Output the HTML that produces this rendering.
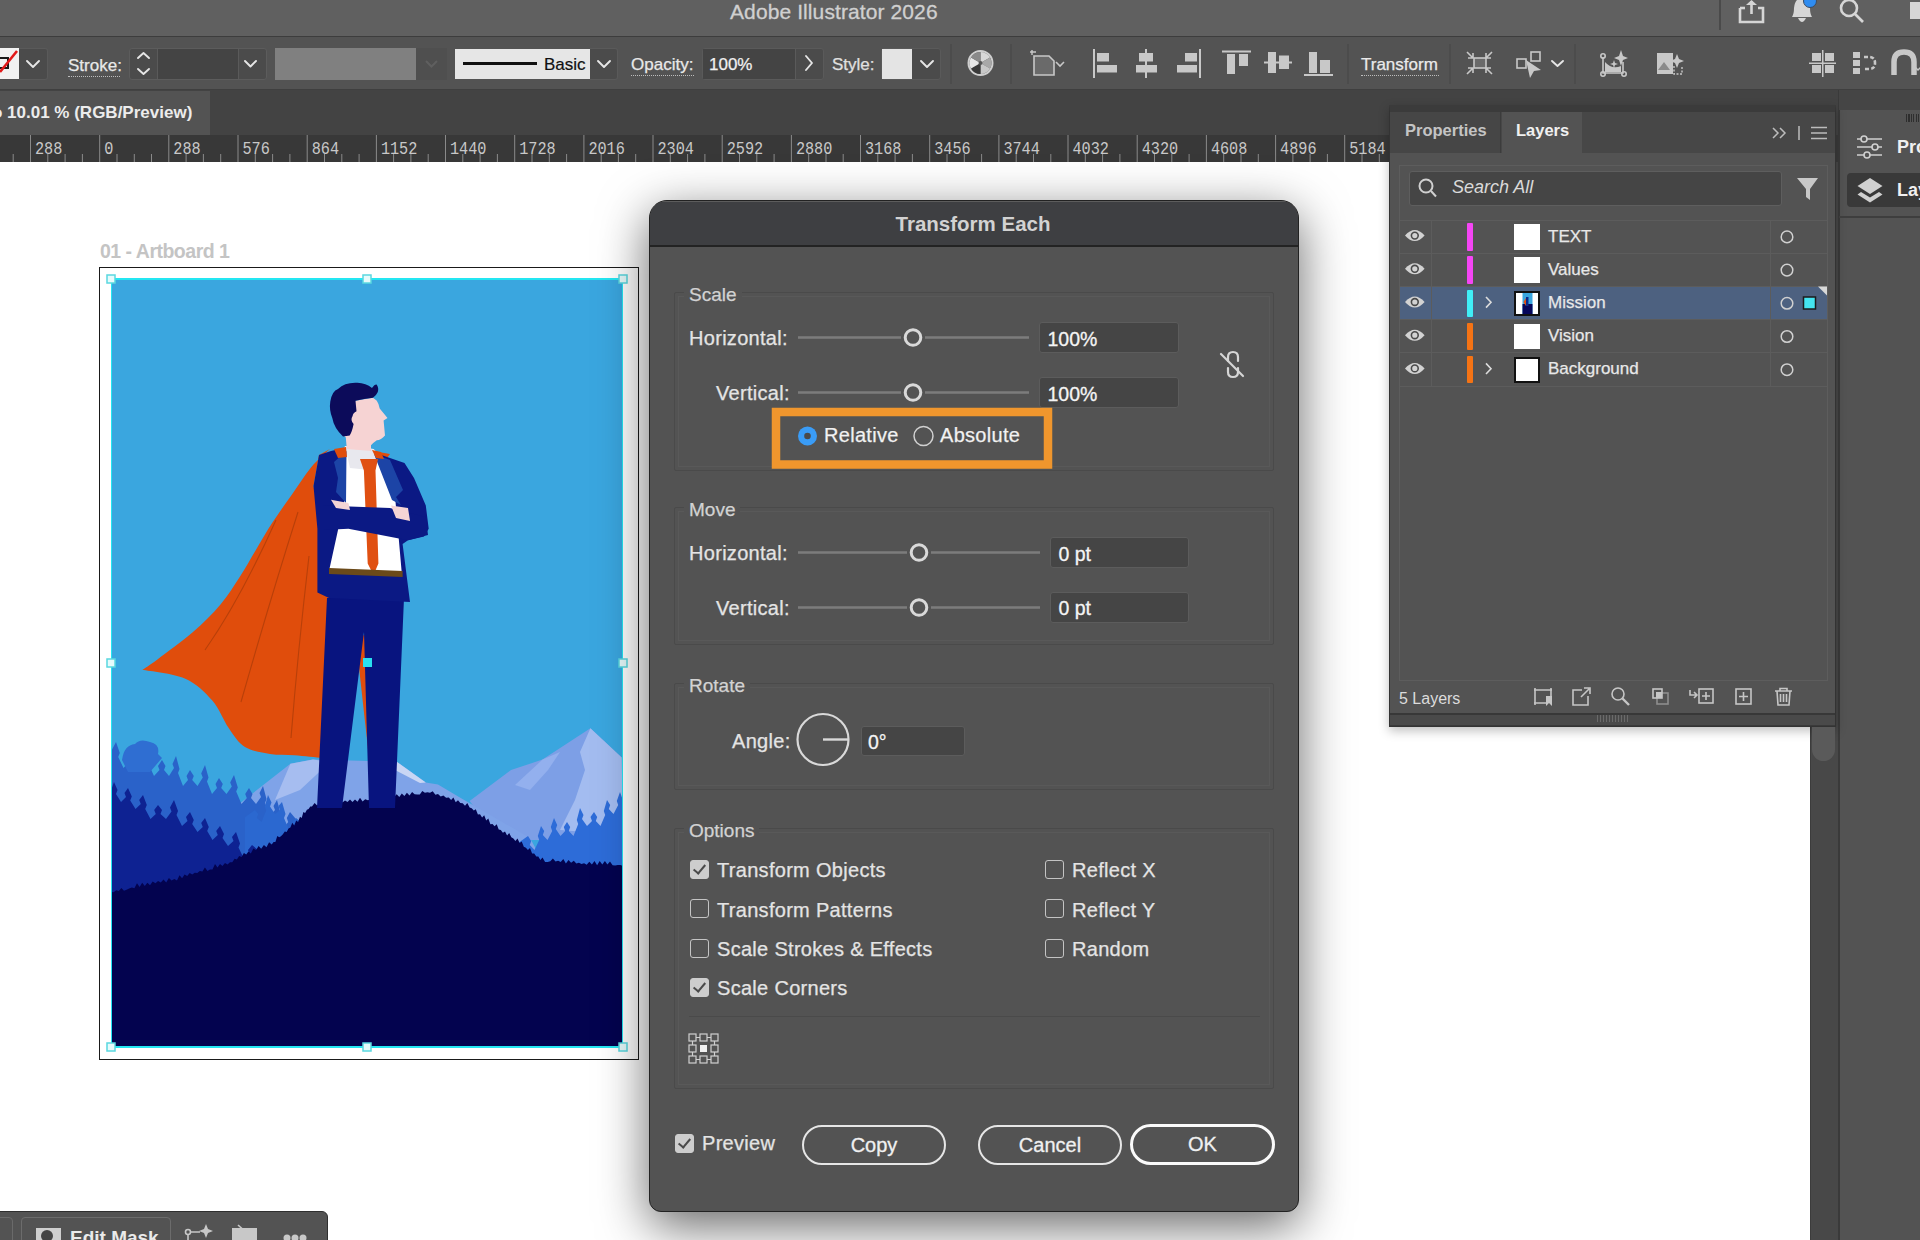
<!DOCTYPE html>
<html><head><meta charset="utf-8">
<style>
*{box-sizing:border-box;margin:0;padding:0}
html,body{width:1920px;height:1240px;overflow:hidden;background:#fff;font-family:"Liberation Sans",sans-serif}
.a{position:absolute}
#title{left:0;top:0;width:1920px;height:37px;background:#606060;border-bottom:1px solid #3d3d3d}
#ctrl{left:0;top:37px;width:1920px;height:53px;background:#535353;border-bottom:1px solid #3f3f3f}
#tabs{left:0;top:90px;width:1920px;height:45px;background:#434343}
#ruler{left:0;top:135px;width:1390px;height:27px;background:#383838}
#canvas{left:0;top:162px;width:1810px;height:1078px;background:#fff}
#vscroll{left:1810px;top:162px;width:28px;height:1078px;background:#484848;border-left:1px solid #3c3c3c}
#dock{left:1838px;top:90px;width:82px;height:1150px;background:#535353;border-left:2px solid #3a3a3a}
.lbl{color:#e0e0e0}
.grp{border:1px solid #4a4a4a;border-radius:2px}
.grp::after{content:"";position:absolute;left:3px;top:3px;right:3px;bottom:3px;border:1px solid #595959}
.glab{font-size:19px;color:#d2d2d2;background:#535353;padding:0 5px;margin-top:1.5px;-webkit-text-stroke:0.25px #d2d2d2}
.dl{font-size:20px;color:#e4e4e4;white-space:nowrap;letter-spacing:0.3px;-webkit-text-stroke:0.25px #e4e4e4}
.fld{background:#454545;border:1.5px solid #5c5c5c;border-radius:3px}
.fld span{position:absolute;left:7.5px;top:4.5px;font-size:19.5px;color:#f4f4f4;-webkit-text-stroke:0.3px #f4f4f4}
.cb{width:19px;height:19px;border:1.5px solid #c4c4c4;border-radius:3px}
.cb.on{background:#cdcdcd;border-color:#cdcdcd}
.cb.on::after{content:"";position:absolute;left:5px;top:1px;width:5px;height:10px;border:solid #4a4a4a;border-width:0 2.4px 2.4px 0;transform:rotate(40deg)}
.btn{border:2px solid #e6e6e6;border-radius:21px;text-align:center;font-size:20px;color:#f0f0f0;line-height:36px;-webkit-text-stroke:0.3px #f0f0f0}

.rn{top:138.5px;font-family:"Liberation Mono",monospace;font-size:15.2px;color:#c8c8c8;transform:scaleY(1.17);transform-origin:0 0;letter-spacing:0px}
</style></head><body>
<div id="title" class="a"></div>
<div id="ctrl" class="a"></div>
<div id="tabs" class="a"></div>
<div id="ruler" class="a"></div>
<div id="canvas" class="a"></div>
<div id="vscroll" class="a"></div>
<div id="dock" class="a"></div>


<svg class="a" style="left:960px;top:40px" width="960" height="48" viewBox="960 40 960 48">
 <!-- globe / recolor -->
 <circle cx="980.5" cy="63" r="12" fill="#5a5a5a" stroke="#cfcfcf" stroke-width="2"/>
 <path d="M980.5 63 L980.5 52 A11 11 0 0 1 990 57.5 Z" fill="#d8d8d8"/>
 <path d="M980.5 63 L990 57.5 A11 11 0 0 1 990 68.5 Z" fill="#a8a8a8"/>
 <path d="M980.5 63 L990 68.5 A11 11 0 0 1 980.5 74 Z" fill="#c8c8c8"/>
 <path d="M980.5 63 L980.5 74 A11 11 0 0 1 971 68.5 Z" fill="#3a3a3a"/>
 <path d="M980.5 63 L971 68.5 A11 11 0 0 1 971 57.5 Z" fill="#e8e8e8"/>
 <path d="M980.5 63 L971 57.5 A11 11 0 0 1 980.5 52 Z" fill="#8a8a8a"/>
 <circle cx="980.5" cy="63" r="2" fill="#555"/>
 <!-- artboard icon -->
 <path d="M1034 56 H1049 L1054 61 V75 H1034 Z" fill="#6a6a6a" stroke="#c8c8c8" stroke-width="1.6"/>
 <path d="M1030 52 H1036 M1032 50 V55" stroke="#c8c8c8" stroke-width="1.4"/>
 <path d="M1056 62 L1060 66 L1064 62" fill="none" stroke="#c8c8c8" stroke-width="1.6"/>
 <g fill="#c8c8c8">
  <!-- align left -->
  <rect x="1093" y="49" width="2" height="29"/><rect x="1097" y="53" width="12" height="8.5"/><rect x="1097" y="65" width="20" height="7.5"/>
  <!-- align hcenter -->
  <rect x="1145" y="49" width="2" height="29"/><rect x="1139" y="53" width="14" height="8.5"/><rect x="1136" y="65" width="21" height="7.5"/>
  <!-- align right -->
  <rect x="1199" y="49" width="2" height="29"/><rect x="1185" y="53" width="12" height="8.5"/><rect x="1177" y="65" width="20" height="7.5"/>
  <!-- align top -->
  <rect x="1222" y="50.5" width="29" height="2"/><rect x="1227" y="54" width="8" height="20"/><rect x="1239" y="54" width="9" height="12"/>
  <!-- align vcenter -->
  <rect x="1264" y="61.5" width="28" height="2"/><rect x="1268" y="52" width="8" height="21"/><rect x="1279" y="55.5" width="10" height="13.5"/>
  <!-- align bottom -->
  <rect x="1304" y="74" width="29" height="2"/><rect x="1309" y="52" width="8" height="21"/><rect x="1320" y="60" width="10" height="13"/>
 </g>
 <!-- shrink icon -->
 <g fill="none" stroke="#c8c8c8" stroke-width="1.6">
  <rect x="1474" y="58" width="12" height="10" fill="#6a6a6a"/>
  <path d="M1467 52 L1473 58 M1473 53 V58 H1468"/><path d="M1492 52 L1486 58 M1486 53 V58 H1491"/>
  <path d="M1467 74 L1473 68 M1473 73 V68 H1468"/><path d="M1492 74 L1486 68 M1486 73 V68 H1491"/>
  <rect x="1517" y="59" width="9" height="9"/><rect x="1531" y="52" width="9" height="9"/>
 </g>
 <path d="M1526 60 L1541 70 L1534 71 L1530 78 Z" fill="#c8c8c8"/>
 <!-- crop AI -->
 <g fill="none" stroke="#c8c8c8" stroke-width="1.6">
  <path d="M1603 57 V73 H1623 V62"/><circle cx="1603" cy="56" r="2.2"/><circle cx="1603" cy="74" r="2.2"/><circle cx="1624" cy="74" r="2.2"/>
 </g>
 <path d="M1605 72 L1605 62 Q1612 70 1621 66 L1621 72 Z" fill="#c8c8c8"/>
 <path d="M1621 50 L1623 56 L1628 58 L1623 60 L1621 66 L1619 60 L1614 58 L1619 56 Z" fill="#c8c8c8"/>
 <path d="M1614 60 L1615 63 L1618 64 L1615 65 L1614 68 L1613 65 L1610 64 L1613 63 Z" fill="#c8c8c8"/>
 <!-- image AI -->
 <path d="M1657 53 H1673 V74 H1657 Z" fill="#c8c8c8"/>
 <path d="M1658 70 L1664 62 L1670 70 Z" fill="#8a8a8a"/>
 <path d="M1677 54 L1679 59 L1684 61 L1679 63 L1677 68 L1675 63 L1670 61 L1675 59 Z" fill="#c8c8c8"/>
 <path d="M1674 66 V74 H1682 V66" fill="none" stroke="#c8c8c8" stroke-width="1.4" stroke-dasharray="2 1.5"/>
 <!-- grid -->
 <g fill="#c8c8c8"><rect x="1812" y="53" width="9" height="8"/><rect x="1825" y="53" width="9" height="8"/><rect x="1812" y="65" width="9" height="8"/><rect x="1825" y="65" width="9" height="8"/><rect x="1822" y="50" width="1.5" height="27"/><rect x="1809" y="62.5" width="27" height="1.5"/></g>
 <!-- puppet -->
 <g fill="#c8c8c8"><rect x="1853" y="52" width="7" height="6"/><rect x="1853" y="60" width="7" height="6"/><rect x="1853" y="68" width="7" height="6"/></g>
 <path d="M1864 57 H1869 Q1875 57 1875 63 Q1875 69 1869 69 H1864" fill="none" stroke="#c8c8c8" stroke-width="2.6" stroke-dasharray="4 2"/>
 <!-- magnet -->
 <path d="M1894 75 V62 Q1894 52 1904 52 Q1914 52 1914 62 V75" fill="none" stroke="#c8c8c8" stroke-width="5.5"/>
 <path d="M1914 66 L1918 70 L1922 66" fill="none" stroke="#c8c8c8" stroke-width="1.4"/>
</svg>

<!-- doc tab -->
<div class="a" style="left:0;top:91px;width:210px;height:44px;background:#535353"></div>
<div class="a" style="left:-8px;top:103px;font-size:17px;font-weight:bold;color:#ececec;white-space:nowrap">o 10.01 % (RGB/Preview)</div>

<svg class="a" style="left:0;top:135px" width="1390" height="27" viewBox="0 0 1390 27">
<g stroke="#8a8a8a" stroke-width="1">
<path d="M-38.7 0 V27"/>
<path d="M-21.4 19 V27"/>
<path d="M-4.1 19 V27"/>
<path d="M13.2 19 V27"/>
<path d="M30.5 0 V27"/>
<path d="M47.8 19 V27"/>
<path d="M65.1 19 V27"/>
<path d="M82.4 19 V27"/>
<path d="M99.7 0 V27"/>
<path d="M117.0 19 V27"/>
<path d="M134.3 19 V27"/>
<path d="M151.5 19 V27"/>
<path d="M168.8 0 V27"/>
<path d="M186.1 19 V27"/>
<path d="M203.4 19 V27"/>
<path d="M220.7 19 V27"/>
<path d="M238.0 0 V27"/>
<path d="M255.3 19 V27"/>
<path d="M272.6 19 V27"/>
<path d="M289.9 19 V27"/>
<path d="M307.2 0 V27"/>
<path d="M324.5 19 V27"/>
<path d="M341.8 19 V27"/>
<path d="M359.1 19 V27"/>
<path d="M376.4 0 V27"/>
<path d="M393.6 19 V27"/>
<path d="M410.9 19 V27"/>
<path d="M428.2 19 V27"/>
<path d="M445.5 0 V27"/>
<path d="M462.8 19 V27"/>
<path d="M480.1 19 V27"/>
<path d="M497.4 19 V27"/>
<path d="M514.7 0 V27"/>
<path d="M532.0 19 V27"/>
<path d="M549.3 19 V27"/>
<path d="M566.6 19 V27"/>
<path d="M583.9 0 V27"/>
<path d="M601.2 19 V27"/>
<path d="M618.4 19 V27"/>
<path d="M635.7 19 V27"/>
<path d="M653.0 0 V27"/>
<path d="M670.3 19 V27"/>
<path d="M687.6 19 V27"/>
<path d="M704.9 19 V27"/>
<path d="M722.2 0 V27"/>
<path d="M739.5 19 V27"/>
<path d="M756.8 19 V27"/>
<path d="M774.1 19 V27"/>
<path d="M791.4 0 V27"/>
<path d="M808.7 19 V27"/>
<path d="M826.0 19 V27"/>
<path d="M843.2 19 V27"/>
<path d="M860.5 0 V27"/>
<path d="M877.8 19 V27"/>
<path d="M895.1 19 V27"/>
<path d="M912.4 19 V27"/>
<path d="M929.7 0 V27"/>
<path d="M947.0 19 V27"/>
<path d="M964.3 19 V27"/>
<path d="M981.6 19 V27"/>
<path d="M998.9 0 V27"/>
<path d="M1016.2 19 V27"/>
<path d="M1033.5 19 V27"/>
<path d="M1050.8 19 V27"/>
<path d="M1068.0 0 V27"/>
<path d="M1085.3 19 V27"/>
<path d="M1102.6 19 V27"/>
<path d="M1119.9 19 V27"/>
<path d="M1137.2 0 V27"/>
<path d="M1154.5 19 V27"/>
<path d="M1171.8 19 V27"/>
<path d="M1189.1 19 V27"/>
<path d="M1206.4 0 V27"/>
<path d="M1223.7 19 V27"/>
<path d="M1241.0 19 V27"/>
<path d="M1258.3 19 V27"/>
<path d="M1275.6 0 V27"/>
<path d="M1292.9 19 V27"/>
<path d="M1310.1 19 V27"/>
<path d="M1327.4 19 V27"/>
<path d="M1344.7 0 V27"/>
<path d="M1362.0 19 V27"/>
<path d="M1379.3 19 V27"/>
<path d="M1396.6 19 V27"/>
<path d="M1413.9 0 V27"/>
<path d="M1431.2 19 V27"/>
<path d="M1448.5 19 V27"/>
<path d="M1465.8 19 V27"/>
</g>
</svg>
<div class="a rn" style="left:35.0px">288</div>
<div class="a rn" style="left:104.2px">0</div>
<div class="a rn" style="left:173.3px">288</div>
<div class="a rn" style="left:242.5px">576</div>
<div class="a rn" style="left:311.7px">864</div>
<div class="a rn" style="left:380.9px">1152</div>
<div class="a rn" style="left:450.0px">1440</div>
<div class="a rn" style="left:519.2px">1728</div>
<div class="a rn" style="left:588.4px">2016</div>
<div class="a rn" style="left:657.5px">2304</div>
<div class="a rn" style="left:726.7px">2592</div>
<div class="a rn" style="left:795.9px">2880</div>
<div class="a rn" style="left:865.0px">3168</div>
<div class="a rn" style="left:934.2px">3456</div>
<div class="a rn" style="left:1003.4px">3744</div>
<div class="a rn" style="left:1072.5px">4032</div>
<div class="a rn" style="left:1141.7px">4320</div>
<div class="a rn" style="left:1210.9px">4608</div>
<div class="a rn" style="left:1280.1px">4896</div>
<div class="a rn" style="left:1349.2px">5184</div>

<!-- title bar content -->
<div class="a" style="left:730px;top:0px;font-size:21px;color:#d0d0d0;letter-spacing:0.1px;white-space:nowrap;-webkit-text-stroke:0.3px #d0d0d0">Adobe Illustrator 2026</div>
<div class="a" style="left:1719px;top:0;width:2px;height:30px;background:#4a4a4a"></div>
<svg class="a" style="left:1730px;top:0" width="190" height="36" viewBox="1730 0 190 36">
 <g fill="none" stroke="#d6d6d6" stroke-width="2.6">
  <path d="M1740 8 V22 H1763 V8 H1758"/><path d="M1745 8 H1740"/>
  <path d="M1751.5 14 V1"/>
 </g>
 <path d="M1746 5 L1751.5 0 L1757 5 Z" fill="#d6d6d6"/>
 <path d="M1792 17 Q1794 14 1794 8 Q1795 -2 1802 -2 Q1809 -2 1810 8 Q1810 14 1812 17 Z" fill="#d6d6d6"/>
 <path d="M1798 18 H1806 Q1804 22 1802 22 Q1800 22 1798 18Z" fill="#d6d6d6"/>
 <circle cx="1810" cy="1" r="6.5" fill="#2f8cf0" stroke="#3a4a60" stroke-width="1"/>
 <g fill="none" stroke="#d6d6d6" stroke-width="2.6"><circle cx="1849" cy="8" r="8"/><path d="M1855 14 L1863 22"/></g>
 <rect x="1910" y="2" width="12" height="17" fill="#d6d6d6"/>
</svg>

<!-- control bar -->
<div class="a" style="left:0;top:48px;width:19px;height:31px;background:#f2f2f2"></div>
<svg class="a" style="left:0;top:48px" width="20" height="31" viewBox="0 0 20 31"><rect x="-3" y="10" width="11" height="10" fill="none" stroke="#1a1a1a" stroke-width="2"/><path d="M0 24 L17 3" stroke="#e21a1a" stroke-width="2.6"/></svg>
<div class="a" style="left:19px;top:48px;width:29px;height:32px;background:#4b4b4b;border:1px solid #5a5a5a;border-left:none;border-radius:0 3px 3px 0"></div>
<div class="a" style="left:68px;top:56px;font-size:17px;color:#e8e8e8;-webkit-text-stroke:0.25px #e8e8e8">Stroke:</div>
<div class="a" style="left:68px;top:76px;width:52px;border-top:1.5px dotted #bdbdbd"></div>
<div class="a" style="left:129px;top:48px;width:138px;height:32px;border:1px solid #5c5c5c;border-radius:3px;background:#4b4b4b"></div>
<div class="a" style="left:158px;top:49px;width:80px;height:30px;background:#444"></div>
<div class="a" style="left:157px;top:49px;width:1px;height:30px;background:#5a5a5a"></div>
<div class="a" style="left:238px;top:49px;width:1px;height:30px;background:#5a5a5a"></div>
<div class="a" style="left:275px;top:48px;width:141px;height:32px;background:#808080"></div>
<div class="a" style="left:416px;top:48px;width:31px;height:32px;background:#4f4f4f"></div>
<div class="a" style="left:455px;top:49px;width:135px;height:30px;background:#e6e6e6"></div>
<div class="a" style="left:463px;top:62px;width:74px;height:3px;background:#111"></div>
<div class="a" style="left:544px;top:55px;font-size:17px;color:#111;-webkit-text-stroke:0.2px #111">Basic</div>
<div class="a" style="left:590px;top:48px;width:28px;height:32px;background:#4b4b4b;border:1px solid #5a5a5a;border-left:none;border-radius:0 3px 3px 0"></div>
<div class="a" style="left:631px;top:55px;font-size:17px;color:#e8e8e8;-webkit-text-stroke:0.25px #e8e8e8">Opacity:</div>
<div class="a" style="left:631px;top:75px;width:63px;border-top:1.5px dotted #bdbdbd"></div>
<div class="a" style="left:702px;top:48px;width:122px;height:32px;border:1px solid #5a5a5a;border-radius:3px;background:#4b4b4b"></div>
<div class="a" style="left:703px;top:49px;width:92px;height:30px;background:#444"></div>
<div class="a" style="left:795px;top:49px;width:1px;height:30px;background:#5a5a5a"></div>
<div class="a" style="left:709px;top:55px;font-size:17px;color:#f0f0f0;-webkit-text-stroke:0.25px #f0f0f0">100%</div>
<div class="a" style="left:832px;top:55px;font-size:17px;color:#e0e0e0;-webkit-text-stroke:0.25px #e0e0e0">Style:</div>
<div class="a" style="left:881px;top:48px;width:60px;height:32px;border:1px solid #5a5a5a;border-radius:3px;background:#4b4b4b"></div>
<div class="a" style="left:882px;top:49px;width:30px;height:30px;background:#e4e4e4"></div>
<div class="a" style="left:950px;top:44px;width:2px;height:40px;background:#4c4c4c"></div>
<div class="a" style="left:1010px;top:44px;width:2px;height:40px;background:#4c4c4c"></div>
<div class="a" style="left:1347px;top:44px;width:2px;height:40px;background:#4c4c4c"></div>
<div class="a" style="left:1449px;top:44px;width:2px;height:40px;background:#4c4c4c"></div>
<div class="a" style="left:1574px;top:44px;width:2px;height:40px;background:#4c4c4c"></div>
<div class="a" style="left:1361px;top:55px;font-size:17px;color:#eaeaea;-webkit-text-stroke:0.25px #eaeaea">Transform</div>
<div class="a" style="left:1361px;top:75px;width:78px;border-top:1.5px dotted #bdbdbd"></div>
<svg class="a" style="left:0;top:36px" width="1920" height="54" viewBox="0 36 1920 54">
 <g fill="none" stroke="#e6e6e6" stroke-width="1.9" stroke-linecap="round" stroke-linejoin="round">
  <path d="M27 61 L33 67 L39 61"/>
  <path d="M138 58 L143.5 53 L149 58"/><path d="M138 69 L143.5 74 L149 69"/>
  <path d="M245 61 L250.5 66.5 L256 61"/>
  <path d="M598 61 L604 67 L610 61"/>
  <path d="M806 56 L812 63 L806 70"/>
  <path d="M921 61 L927 67 L933 61"/>
  <path d="M1552 61 L1557.5 66 L1563 61"/>
 </g>
 <path d="M426 61 L431.5 66.5 L437 61" fill="none" stroke="#5f5f5f" stroke-width="2"/>
</svg>




<!-- artboard -->
<div class="a" style="left:100px;top:240px;font-size:19.5px;font-weight:bold;color:#c4c4c4;letter-spacing:-0.5px;white-space:nowrap">01 - Artboard 1</div>
<div class="a" style="left:99px;top:267px;width:540px;height:793px;border:1.5px solid #1a1a1a;background:#fff"></div>

<svg class="a" style="left:111px;top:278px" width="512" height="770" viewBox="111 278 512 770">
 <rect x="111" y="278" width="512" height="770" fill="#3aa6df"/>
 <!-- right mountain -->
 <path d="M469.6 801 L511 770 L542.5 759.6 L590.4 728.3 L621.7 757.5 L623 840 L500 840 Z" fill="#7d9fe6"/>
 <path d="M590.4 728.3 L621.7 757.5 L623 835 L560 830 L575 800 L585 770 L580 752 Z" fill="#a3bcf0"/>
 <path d="M542.5 759.6 L560 752 L548 770 L530 790 L515 785 Z" fill="#93b0ee"/>
 <!-- center mountain -->
 <path d="M240.4 803 L290.4 763.75 L313 759.6 L396.7 761.7 L425.8 782.5 L438 784.6 L459 797 L530 838 L545 866 L240 866 Z" fill="#7fa3e8"/>
 <path d="M290.4 763.75 L313 759.6 L330 762 L300 790 L275 800 Z" fill="#a6bdf0"/>
 <path d="M396.7 761.7 L425.8 782.5 L420 783 L395 770 Z" fill="#c9d6f4"/>
 <!-- left trees mid layer -->
 <path d="M111.0 900.0 L111.0 751.6 L116.0 742.0 L119.8 753.0 L118.2 757.0 L123.5 768.0 L128.8 762.0 L127.2 758.0 L131.0 752.0 L134.8 758.0 L133.2 762.0 L138.5 768.0 L143.8 760.0 L142.2 756.0 L146.0 748.0 L150.0 760.0 L148.5 764.0 L154.0 776.0 L159.5 770.0 L158.0 766.0 L162.0 760.0 L165.5 766.0 L164.0 770.0 L169.0 776.0 L174.0 768.0 L172.5 764.0 L176.0 756.0 L179.5 769.0 L178.0 773.0 L183.0 786.0 L188.0 780.0 L186.5 776.0 L190.0 770.0 L193.8 776.0 L192.2 780.0 L197.5 786.0 L202.8 777.5 L201.2 773.5 L205.0 765.0 L208.5 777.5 L207.0 781.5 L212.0 794.0 L217.0 788.0 L215.5 784.0 L219.0 778.0 L222.8 784.0 L221.2 788.0 L226.5 794.0 L231.8 786.5 L230.2 782.5 L234.0 775.0 L237.8 787.5 L236.2 791.5 L241.5 804.0 L246.8 798.0 L245.2 794.0 L249.0 788.0 L252.5 794.0 L251.0 798.0 L256.0 804.0 L261.0 797.0 L259.5 793.0 L263.0 786.0 L266.5 799.0 L265.0 803.0 L270.0 816.0 L275.0 810.0 L273.5 806.0 L277.0 800.0 L280.2 812.0 L278.8 816.0 L283.5 828.0 L288.2 822.0 L286.8 818.0 L290.0 812.0 L298.0 821.6 L298.0 900.0 Z" fill="#2a62c9"/>
 <path d="M122 760 Q124 745 135 744 Q140 738 150 742 Q160 744 158 754 L162 758 L150 772 L128 772 Z" fill="#2f6ed2"/>
 <path d="M245.0 880.0 L245.0 817.2 L255.0 810.0 L258.2 814.0 L256.8 818.0 L261.5 822.0 L266.2 810.5 L264.8 806.5 L268.0 795.0 L271.5 802.5 L270.0 806.5 L275.0 814.0 L280.0 810.0 L278.5 806.0 L282.0 802.0 L285.5 814.0 L284.0 818.0 L289.0 830.0 L294.0 826.0 L292.5 822.0 L296.0 818.0 L305.0 825.2 L305.0 880.0 Z" fill="#2b68d0"/>
 <!-- left dark tree layer -->
 <path d="M111.0 900.0 L111.0 790.4 L114.0 782.0 L117.5 790.0 L116.0 794.0 L121.0 802.0 L126.0 797.0 L124.5 793.0 L128.0 788.0 L131.8 796.5 L130.2 800.5 L135.5 809.0 L140.8 804.0 L139.2 800.0 L143.0 795.0 L146.8 805.0 L145.2 809.0 L150.5 819.0 L155.8 814.0 L154.2 810.0 L158.0 805.0 L162.0 810.0 L160.5 814.0 L166.0 819.0 L171.5 811.5 L170.0 807.5 L174.0 800.0 L178.0 811.0 L176.5 815.0 L182.0 826.0 L187.5 821.0 L186.0 817.0 L190.0 812.0 L193.8 820.0 L192.2 824.0 L197.5 832.0 L202.8 827.0 L201.2 823.0 L205.0 818.0 L208.8 827.0 L207.2 831.0 L212.5 840.0 L217.8 835.0 L216.2 831.0 L220.0 826.0 L224.0 834.0 L222.5 838.0 L228.0 846.0 L233.5 841.0 L232.0 837.0 L236.0 832.0 L240.0 843.5 L238.5 847.5 L244.0 859.0 L249.5 854.0 L248.0 850.0 L252.0 845.0 L262.0 853.4 L262.0 900.0 Z" fill="#0e2292"/>
 <!-- right trees -->
 <path d="M516.0 880.0 L516.0 844.4 L528.0 836.0 L531.2 841.0 L529.8 845.0 L534.5 850.0 L539.2 840.0 L537.8 836.0 L541.0 826.0 L544.2 831.0 L542.8 835.0 L547.5 840.0 L552.2 831.0 L550.8 827.0 L554.0 818.0 L557.2 825.0 L555.8 829.0 L560.5 836.0 L565.2 831.0 L563.8 827.0 L567.0 822.0 L570.2 827.0 L568.8 831.0 L573.5 836.0 L578.2 824.0 L576.8 820.0 L580.0 808.0 L583.5 815.0 L582.0 819.0 L587.0 826.0 L592.0 821.0 L590.5 817.0 L594.0 812.0 L597.2 817.0 L595.8 821.0 L600.5 826.0 L605.2 815.0 L603.8 811.0 L607.0 800.0 L610.2 805.0 L608.8 809.0 L613.5 814.0 L618.2 805.0 L616.8 801.0 L620.0 792.0 L623.0 800.4 L623.0 880.0 Z" fill="#2d6cd8"/>
 <!-- hill -->
 <path d="M111.0 891.9 L113.6 892.2 L116.2 890.3 L118.8 891.0 L121.4 888.1 L124.0 890.7 L126.6 889.7 L129.2 888.5 L131.8 887.6 L134.4 888.3 L137.0 883.2 L139.6 886.9 L142.2 882.8 L144.8 885.9 L147.4 882.7 L150.0 885.3 L152.7 881.6 L155.4 883.2 L158.1 881.1 L160.8 882.4 L163.5 879.5 L166.2 882.4 L168.9 878.1 L171.6 880.6 L174.3 879.1 L177.0 880.5 L179.5 875.3 L182.1 878.3 L184.6 874.5 L187.2 876.1 L189.7 872.9 L192.2 874.5 L194.8 872.8 L197.3 873.1 L199.8 871.1 L202.4 871.4 L204.9 867.6 L207.5 871.1 L210.0 869.4 L212.5 869.4 L215.0 864.1 L217.5 867.5 L220.0 864.1 L222.5 866.1 L225.0 863.0 L227.5 864.5 L230.0 862.2 L232.3 862.2 L234.6 858.8 L236.9 859.4 L239.2 856.0 L241.6 857.1 L243.9 852.9 L246.2 854.6 L248.5 851.4 L250.8 853.6 L253.4 848.4 L256.0 850.3 L258.6 846.1 L261.2 848.8 L263.9 844.9 L266.5 847.3 L269.1 842.3 L271.7 844.6 L273.6 842.0 L275.4 842.1 L277.3 836.1 L279.2 837.3 L281.0 836.3 L282.9 834.3 L284.8 831.5 L286.7 831.9 L288.5 828.6 L290.4 827.6 L292.3 822.7 L294.2 825.4 L296.2 820.6 L298.1 822.1 L300.0 816.8 L301.7 818.0 L303.4 812.0 L305.1 813.0 L306.9 809.7 L308.6 809.0 L310.3 806.6 L312.0 806.4 L314.6 802.9 L317.1 805.6 L319.7 803.8 L322.3 804.2 L324.9 801.1 L327.4 803.7 L330.0 802.8 L332.5 802.1 L335.0 801.4 L337.5 801.8 L340.0 798.6 L342.5 802.5 L345.0 800.4 L347.5 802.1 L350.0 799.4 L352.5 801.9 L355.0 799.6 L357.5 801.7 L360.0 797.8 L362.6 801.4 L365.2 799.3 L367.9 800.3 L370.5 799.5 L373.1 800.3 L375.7 795.5 L378.4 799.2 L381.0 796.7 L383.6 799.3 L386.2 796.6 L388.8 797.7 L391.5 797.6 L394.1 796.9 L396.7 794.2 L399.3 797.1 L401.8 793.6 L404.4 795.9 L406.9 792.7 L409.5 795.4 L412.1 792.0 L414.6 794.2 L417.2 794.4 L419.8 794.6 L422.3 790.9 L424.9 792.7 L427.4 792.2 L430.0 792.8 L432.7 791.2 L435.4 794.7 L438.0 793.9 L440.7 796.5 L443.4 795.6 L446.1 797.7 L448.8 797.6 L451.1 799.9 L453.4 797.4 L455.7 802.3 L458.0 800.2 L460.3 803.1 L462.7 803.3 L465.0 805.8 L467.3 802.9 L469.6 807.6 L471.7 808.3 L473.8 810.6 L475.8 809.3 L477.9 814.4 L480.0 814.3 L482.1 817.4 L484.2 815.3 L486.2 820.5 L488.3 818.5 L490.4 824.2 L492.5 823.9 L494.6 826.3 L496.7 824.2 L498.7 829.4 L500.8 830.0 L502.9 832.7 L505.0 831.4 L507.1 835.4 L509.2 833.0 L511.3 837.2 L513.4 838.6 L515.4 840.9 L517.5 838.6 L519.6 843.1 L521.7 841.4 L523.8 846.7 L525.9 847.8 L527.9 850.1 L530.0 848.1 L532.1 853.4 L534.2 853.5 L536.3 856.6 L538.3 856.5 L540.4 859.9 L542.5 857.6 L545.1 862.1 L547.7 862.0 L550.3 861.3 L552.9 858.4 L555.5 861.6 L558.1 860.8 L560.7 862.0 L563.3 858.9 L565.9 863.4 L568.5 860.1 L571.1 862.8 L573.8 860.8 L576.3 863.6 L578.9 862.7 L581.5 864.1 L584.1 863.2 L586.7 864.7 L589.3 861.8 L591.9 864.6 L594.5 861.1 L597.1 865.2 L599.7 860.9 L602.3 864.5 L604.9 861.0 L607.4 864.4 L610.0 861.4 L612.6 865.2 L615.2 865.6 L617.8 865.1 L620.4 865.1 L623.0 866.1 L623 1048 L111 1048 Z" fill="#03034f"/>
 <!-- cape -->
 <path d="M330.0 449.0 C326.8 452.1 317.4 459.8 311.0 467.4 C304.6 475.0 298.2 485.7 291.8 494.8 C285.4 503.9 278.6 513.1 272.6 522.3 C266.6 531.4 261.5 540.6 256.0 549.7 C250.5 558.8 245.6 567.9 239.7 577.0 C233.8 586.1 228.3 595.3 220.5 604.5 C212.7 613.7 203.5 622.9 193.0 632.0 C182.5 641.1 165.8 653.1 157.4 659.4 C149.0 665.7 144.8 668.1 142.3 669.8 C149.4 671.2 173.1 673.4 184.8 678.5 C196.5 683.6 205.0 692.2 212.3 700.5 C219.6 708.8 223.2 720.2 228.7 728.0 C234.1 735.8 238.1 742.7 245.0 747.0 C251.9 751.3 261.8 752.6 270.0 754.0 C278.2 755.4 285.8 754.6 294.5 755.3 C303.2 756.0 317.4 757.5 322.0 758.0 L335 758 L335 600 L313.5 486 L319 455 Z" fill="#e04d0c"/>
 <path d="M356 640 L370 767 L381 760 L372 630 Z" fill="#e04d0c"/>
 <g fill="none" stroke="#b8400a" stroke-width="1.1"><path d="M298 512 Q270 600 241 702"/><path d="M309 556 Q298 650 291 738"/><path d="M276 520 Q240 600 205 650"/></g>
 <path d="M373 451 L390 454 L384 462 Z" fill="#e04d0c"/>
 <!-- legs -->
 <path d="M327 598 L404 598 L395 808 L369 808 L364 632 L342 808 L317 808 Z" fill="#08147f"/>
 <!-- jacket -->
 <path d="M319 455 L331 451 L346.5 447.4 L375.5 453 L404.5 463 L414 478 L425.8 505.5 L428.7 528.7 L424 536.4 L408 540.3 L402.6 544 L410 602 L329 598 L317.4 592.6 L317.4 528.7 L313.5 486 Z" fill="#0b1984"/>
 <!-- shirt -->
 <path d="M345 446 L373.5 449 L380 455 L395 495.8 L401.6 571 L329 571 L345.5 495.8 L342 455 Z" fill="#ffffff"/>
 <path d="M345 446 L373.5 449 L380 458 L370 470 L350 468 Z" fill="#e8e8ee"/>
 <!-- lapels -->
 <path d="M334 462 L346.5 451 L346 503 L336 492 L338 478 Z" fill="#1c44a6"/>
 <path d="M374 454 L390 460 L403 490 L396 497 L401 505 L392 500 Z" fill="#1c44a6"/>
 <!-- tie -->
 <path d="M360 459 L378 459 L375.5 470.6 L378.4 563.5 L373.5 575 L367.7 563.5 L363.9 470.6 Z" fill="#e05012"/>
 <!-- belt -->
 <path d="M329 568 L402.6 571 L402.6 577 L329 574 Z" fill="#6b4a1a"/>
 <!-- arms -->
 <path d="M323 505.5 L390 508 L425.8 517 L428 535 L408 540.3 L348.4 528.7 L323 530 Z" fill="#0b1984"/>
 <path d="M331 499.7 L348.4 503 L350 510 L336 508 Z" fill="#f5d5d5"/>
 <path d="M391 505.5 L408 508 L410 521 L396 518 Z" fill="#f5d5d5"/>
 <!-- neck & face -->
 <path d="M355.5 400.7 L373 397.8 L376.8 400.7 Q379 404 379.7 408.4 L387.5 418 L383.6 420.5 L385 435.5 Q381 440 376.8 440.3 Q373 443 371 445.2 L371 451 L346.8 449 L345.8 437.4 Q340 432 342 424 Q343 417 347.8 418 Z" fill="#f6d3d3"/>
 <!-- hair -->
 <path d="M330.3 401.6 Q332 391 338 389 Q345 382 357.4 382.7 Q366 383 372 388 Q375 384 376.8 384.7 Q379 388 377.8 392 Q376 396 373 397.8 Q364 399 355.5 400.7 L356.5 411.3 Q353 413 352.6 416 Q350 420 353.6 424 Q352 432 349.7 435.5 L343 436.5 Q334 428 332.3 418 Q329 410 330.3 401.6 Z" fill="#0c0b5a"/>
 <path d="M334 449 L346 447 L347 457 L338 458 Z" fill="#e04d0c"/>
 <path d="M372 450 L381 452 L384 459 L376 458 Z" fill="#e04d0c"/>
 <!-- selection -->
 <g fill="none" stroke="#24e6f2" stroke-width="2"><rect x="111" y="279" width="512" height="768"/></g>
</svg>
<svg class="a" style="left:100px;top:268px" width="540" height="790" viewBox="100 268 540 790">
 <g fill="#e6fbfc" stroke="#5ad8e0" stroke-width="1.5">
  <rect x="107" y="275" width="8" height="8"/><rect x="363" y="275" width="8" height="8"/><rect x="619" y="275" width="8" height="8"/>
  <rect x="107" y="659" width="8" height="8"/><rect x="619" y="659" width="8" height="8"/>
  <rect x="107" y="1043" width="8" height="8"/><rect x="363" y="1043" width="8" height="8"/><rect x="619" y="1043" width="8" height="8"/>
 </g>
 <rect x="363" y="658" width="9" height="9" fill="#29e0f0"/>
</svg>

<!-- contextual bar -->
<div class="a" style="left:-10px;top:1211px;width:338px;height:40px;background:#535353;border:1px solid #2f2f2f;border-radius:6px"></div>
<div class="a" style="left:-5px;top:1217px;width:18px;height:30px;border:1px solid #6a6a6a;border-radius:4px"></div>
<div class="a" style="left:21px;top:1217px;width:150px;height:30px;border:1px solid #6c6c6c;border-radius:4px"></div>
<div class="a" style="left:36px;top:1228px;width:25px;height:15px;background:#cfcfcf"></div>
<div class="a" style="left:41px;top:1230px;width:12px;height:12px;border-radius:50%;background:#444"></div>
<div class="a" style="left:70px;top:1227px;font-size:19px;font-weight:bold;color:#eaeaea">Edit Mask</div>
<svg class="a" style="left:180px;top:1220px" width="140" height="20" viewBox="180 1220 140 20">
 <g fill="none" stroke="#c8c8c8" stroke-width="1.6"><circle cx="188" cy="1232" r="2.5"/><path d="M191 1232 H200 M188 1235 V1240"/><path d="M238 1225 L255 1240"/></g>
 <path d="M206 1224 L208 1229 L213 1231 L208 1233 L206 1238 L204 1233 L199 1231 L204 1229 Z" fill="#c8c8c8"/>
 <rect x="232" y="1228" width="25" height="15" fill="#c8c8c8"/>
 <circle cx="287" cy="1238" r="3.5" fill="#c8c8c8"/><circle cx="295" cy="1238" r="3.5" fill="#c8c8c8"/><circle cx="303" cy="1238" r="3.5" fill="#c8c8c8"/>
</svg>
<!-- fill gap right of ruler -->
<div class="a" style="left:1390px;top:135px;width:448px;height:27px;background:#3a3a3a"></div>

<!-- layers panel -->
<div class="a" style="left:1389px;top:105px;width:447px;height:622px;background:#535353;border:1px solid #333;border-top:7px solid #3b3b3b;box-shadow:0 4px 10px rgba(0,0,0,0.25)"></div>
<div class="a" style="left:1390px;top:112px;width:445px;height:41px;background:#474747"></div>
<div class="a" style="left:1390px;top:112px;width:111px;height:41px;background:#464646;border-right:1px solid #3c3c3c"></div>
<div class="a" style="left:1502px;top:112px;width:80px;height:42px;background:#535353"></div>
<div class="a" style="left:1405px;top:121px;font-size:16.5px;font-weight:bold;color:#c4c4c4">Properties</div>
<div class="a" style="left:1516px;top:121px;font-size:16.5px;font-weight:bold;color:#f0f0f0">Layers</div>
<svg class="a" style="left:1760px;top:112px" width="75" height="41" viewBox="1760 112 75 41">
 <g fill="none" stroke="#bcbcbc" stroke-width="1.5"><path d="M1773 128 L1778 133 L1773 138"/><path d="M1780 128 L1785 133 L1780 138"/></g>
 <path d="M1799 126 V140" stroke="#bcbcbc" stroke-width="1.5"/>
 <g stroke="#bcbcbc" stroke-width="1.6"><path d="M1811 127.5 H1827 M1811 133 H1827 M1811 138.5 H1827"/></g>
</svg>
<div class="a" style="left:1399px;top:165px;width:429px;height:516px;border:1px solid #5d5d5d"></div>
<div class="a" style="left:1409px;top:171px;width:373px;height:35px;background:#454545;border:1px solid #5e5e5e;border-radius:3px"></div>
<svg class="a" style="left:1400px;top:165px" width="430" height="50" viewBox="1400 165 430 50">
 <g fill="none" stroke="#d0d0d0" stroke-width="2"><circle cx="1426" cy="186" r="6.5"/><path d="M1431 191 L1436 196.5"/></g>
 <path d="M1797 178 H1818 L1810 189 V200 L1806 197 V189 Z" fill="#c8c8c8"/>
</svg>
<div class="a" style="left:1452px;top:177px;font-size:18px;font-style:italic;color:#dadada">Search All</div>

<div class="a" style="left:1400px;top:219.6px;width:427px;height:33.2px;background:#535353;border-top:1px solid #5c5c5c"></div>
<div class="a" style="left:1431px;top:219.6px;width:1px;height:33.2px;background:#5c5c5c"></div>
<div class="a" style="left:1770px;top:219.6px;width:1px;height:33.2px;background:#5c5c5c"></div>
<div class="a" style="left:1467px;top:223.1px;width:5.5px;height:27.5px;background:#f545f5;border-radius:1px"></div>
<div class="a" style="left:1513.5px;top:224.2px;width:26px;height:25.5px;background:#fff;border:none"></div>
<div class="a" style="left:1548px;top:226.6px;font-size:17px;color:#e8e8e8;-webkit-text-stroke:0.25px #e8e8e8">TEXT</div>
<div class="a" style="left:1400px;top:252.8px;width:427px;height:33.2px;background:#535353;border-top:1px solid #5c5c5c"></div>
<div class="a" style="left:1431px;top:252.8px;width:1px;height:33.2px;background:#5c5c5c"></div>
<div class="a" style="left:1770px;top:252.8px;width:1px;height:33.2px;background:#5c5c5c"></div>
<div class="a" style="left:1467px;top:256.3px;width:5.5px;height:27.5px;background:#f545f5;border-radius:1px"></div>
<div class="a" style="left:1513.5px;top:257.40000000000003px;width:26px;height:25.5px;background:#fff;border:none"></div>
<div class="a" style="left:1548px;top:259.8px;font-size:17px;color:#e8e8e8;-webkit-text-stroke:0.25px #e8e8e8">Values</div>
<div class="a" style="left:1400px;top:286.0px;width:427px;height:33.2px;background:#4d6180;border-top:1px solid #5c5c5c"></div>
<div class="a" style="left:1431px;top:286.0px;width:1px;height:33.2px;background:#5c5c5c"></div>
<div class="a" style="left:1770px;top:286.0px;width:1px;height:33.2px;background:#5c5c5c"></div>
<div class="a" style="left:1467px;top:289.5px;width:5.5px;height:27.5px;background:#40eef8;border-radius:1px"></div>
<div class="a" style="left:1513.5px;top:290.6px;width:26px;height:25.5px;background:#fff;border:2px solid #111"></div>
<div class="a" style="left:1548px;top:293.0px;font-size:17px;color:#e8e8e8;-webkit-text-stroke:0.25px #e8e8e8">Mission</div>
<div class="a" style="left:1400px;top:319.2px;width:427px;height:33.2px;background:#535353;border-top:1px solid #5c5c5c"></div>
<div class="a" style="left:1431px;top:319.2px;width:1px;height:33.2px;background:#5c5c5c"></div>
<div class="a" style="left:1770px;top:319.2px;width:1px;height:33.2px;background:#5c5c5c"></div>
<div class="a" style="left:1467px;top:322.7px;width:5.5px;height:27.5px;background:#f57314;border-radius:1px"></div>
<div class="a" style="left:1513.5px;top:323.8px;width:26px;height:25.5px;background:#fff;border:none"></div>
<div class="a" style="left:1548px;top:326.2px;font-size:17px;color:#e8e8e8;-webkit-text-stroke:0.25px #e8e8e8">Vision</div>
<div class="a" style="left:1400px;top:352.4px;width:427px;height:33.2px;background:#535353;border-top:1px solid #5c5c5c"></div>
<div class="a" style="left:1431px;top:352.4px;width:1px;height:33.2px;background:#5c5c5c"></div>
<div class="a" style="left:1770px;top:352.4px;width:1px;height:33.2px;background:#5c5c5c"></div>
<div class="a" style="left:1467px;top:355.9px;width:5.5px;height:27.5px;background:#f57314;border-radius:1px"></div>
<div class="a" style="left:1513.5px;top:357.0px;width:26px;height:25.5px;background:#fff;border:2px solid #111"></div>
<div class="a" style="left:1548px;top:359.4px;font-size:17px;color:#e8e8e8;-webkit-text-stroke:0.25px #e8e8e8">Background</div>
<div class="a" style="left:1400px;top:385.6px;width:427px;height:1px;background:#5c5c5c"></div>
<svg class="a" style="left:1390px;top:215px" width="440" height="180" viewBox="1390 215 440 180">
<path d="M1405 235.6 Q1414.8 224.6 1424.6 235.6 Q1414.8 246.6 1405 235.6 Z" fill="#d2d2d2"/><circle cx="1414.8" cy="235.6" r="3.4" fill="none" stroke="#4a4a4a" stroke-width="1.6"/>
<circle cx="1787" cy="236.9" r="5.8" fill="none" stroke="#d0d0d0" stroke-width="1.5"/>
<path d="M1405 268.8 Q1414.8 257.8 1424.6 268.8 Q1414.8 279.8 1405 268.8 Z" fill="#d2d2d2"/><circle cx="1414.8" cy="268.8" r="3.4" fill="none" stroke="#4a4a4a" stroke-width="1.6"/>
<circle cx="1787" cy="270.1" r="5.8" fill="none" stroke="#d0d0d0" stroke-width="1.5"/>
<path d="M1405 302.0 Q1414.8 291.0 1424.6 302.0 Q1414.8 313.0 1405 302.0 Z" fill="#d2d2d2"/><circle cx="1414.8" cy="302.0" r="3.4" fill="none" stroke="#4a4a4a" stroke-width="1.6"/>
<circle cx="1787" cy="303.3" r="5.8" fill="none" stroke="#d0d0d0" stroke-width="1.5"/>
<path d="M1486 297.0 L1491 302.3 L1486 307.6" fill="none" stroke="#dcdcdc" stroke-width="1.6"/>
<path d="M1405 335.2 Q1414.8 324.2 1424.6 335.2 Q1414.8 346.2 1405 335.2 Z" fill="#d2d2d2"/><circle cx="1414.8" cy="335.2" r="3.4" fill="none" stroke="#4a4a4a" stroke-width="1.6"/>
<circle cx="1787" cy="336.5" r="5.8" fill="none" stroke="#d0d0d0" stroke-width="1.5"/>
<path d="M1405 368.4 Q1414.8 357.4 1424.6 368.4 Q1414.8 379.4 1405 368.4 Z" fill="#d2d2d2"/><circle cx="1414.8" cy="368.4" r="3.4" fill="none" stroke="#4a4a4a" stroke-width="1.6"/>
<circle cx="1787" cy="369.7" r="5.8" fill="none" stroke="#d0d0d0" stroke-width="1.5"/>
<path d="M1486 363.4 L1491 368.7 L1486 374.0" fill="none" stroke="#dcdcdc" stroke-width="1.6"/>
<rect x="1803.5" y="297.0" width="12" height="12" fill="#44e4f0" stroke="#1b1b1b" stroke-width="1.5"/>
<path d="M1818 286.5 H1827 V295.5 Z" fill="#d8d8d8"/>
</svg>
<svg class="a" style="left:1515.5px;top:292.6px" width="22" height="21.5" viewBox="0 0 22 21.5"><rect x="0" y="0" width="22" height="21.5" fill="#fff"/><rect x="6.5" y="0" width="10" height="21.5" fill="#3aa6df"/><rect x="6.5" y="11" width="10" height="10.5" fill="#06065a"/><rect x="10" y="4" width="2.5" height="9" fill="#0a2a8a"/><path d="M7.5 9 L10 5 L10 13Z" fill="#e05010"/></svg>
<div class="a" style="left:1399px;top:690px;font-size:16px;color:#dcdcdc">5 Layers</div>
<svg class="a" style="left:1520px;top:683px" width="300" height="28" viewBox="1520 683 300 28">
 <g fill="none" stroke="#c6c6c6" stroke-width="1.6">
  <path d="M1535 688 V705 M1551 688 V697 M1534 690 H1552 M1534 703 H1546"/>
  <path d="M1582 690 H1573 V705 H1588 V696 M1581 697 L1589 689 M1584 688 H1590 V694"/>
  <circle cx="1618" cy="694" r="6"/><path d="M1622.5 698.5 L1629 705" stroke-width="2.4"/>
  <rect x="1657" y="693" width="11" height="11" stroke="#8e8e8e"/><rect x="1653" y="689" width="9" height="9"/><rect x="1656" y="692" width="6" height="6" fill="#c6c6c6" stroke="none"/>
  <path d="M1690 690 V695 H1697 M1694 692 L1697 695 L1694 698"/><rect x="1699" y="689" width="14" height="14"/><path d="M1706 692 V700 M1702 696 H1710"/>
  <rect x="1736" y="689" width="15" height="15"/><path d="M1743.5 692 V701 M1739 696.5 H1748"/>
  <path d="M1775 691 H1792 M1780 691 V688.5 H1787 V691 M1777 691 L1778 705 H1789 L1790 691 M1780.5 694 V702 M1783.5 694 V702 M1786.5 694 V702"/>
 </g>
 <path d="M1546 696 H1552 V706 L1549 703 L1546 706 Z" fill="#c6c6c6"/>
</svg>
<div class="a" style="left:1390px;top:713px;width:445px;height:13px;background:#4a4a4a;border-top:2.5px solid #383838;border-bottom:1.5px solid #3a3a3a"></div>
<div class="a" style="left:1597px;top:715px;width:31px;height:7px;background:repeating-linear-gradient(90deg,#6a6a6a 0 1px,transparent 1px 3px)"></div>

<!-- right dock -->
<div class="a" style="left:1839px;top:90px;width:81px;height:20px;background:#454545"></div>
<div class="a" style="left:1906px;top:114px;width:14px;height:8px;background:repeating-linear-gradient(90deg,#2e2e2e 0 1px,transparent 1px 2.5px)"></div>
<svg class="a" style="left:1850px;top:130px" width="40" height="80" viewBox="1850 130 40 80">
 <g fill="none" stroke="#d0d0d0" stroke-width="1.6"><path d="M1857 139 H1882 M1857 147 H1882 M1857 155 H1882"/></g>
 <g fill="#535353" stroke="#d0d0d0" stroke-width="1.6"><circle cx="1864" cy="139" r="3"/><circle cx="1875" cy="147" r="3"/><circle cx="1867" cy="155" r="3"/></g>
</svg>
<div class="a" style="left:1897px;top:137px;font-size:18px;font-weight:bold;color:#f0f0f0">Pro</div>
<div class="a" style="left:1847px;top:173px;width:80px;height:34px;background:#393939;border-radius:4px"></div>
<svg class="a" style="left:1850px;top:170px" width="40" height="40" viewBox="1850 170 40 40">
 <path d="M1870 178 L1882.5 186 L1870 194 L1857.5 186 Z" fill="#d0d0d0"/>
 <path d="M1861 192 L1870 197.5 L1879 192 L1882.5 194.5 L1870 202.5 L1857.5 194.5 Z" fill="#d0d0d0"/>
</svg>
<div class="a" style="left:1897px;top:180px;font-size:18px;font-weight:bold;color:#f0f0f0">Lay</div>
<div class="a" style="left:1839px;top:216px;width:81px;height:2px;background:#3e3e3e"></div>
<div class="a" style="left:1812px;top:727px;width:23px;height:34px;background:#5a5a5a;border-radius:0 0 12px 12px"></div>

<!-- dialog -->
<div class="a" id="dlg" style="left:649px;top:200px;width:650px;height:1012px;border-radius:18px 18px 12px 12px;background:#535353;box-shadow:0 14px 50px rgba(0,0,0,0.6);border:1px solid #222;overflow:hidden">
 <div class="a" style="left:0;top:0;width:650px;height:46px;background:#3e3f42;border-top:1px solid #5c5c5c;border-bottom:2px solid #232323"></div>
 <div class="a" style="left:0;top:11px;width:646px;text-align:center;font-size:20.5px;font-weight:bold;color:#d2d2d2">Transform Each</div>
</div>
<div class="a" style="left:0;top:0;width:1920px;height:1240px">
 <!-- group boxes -->
 <div class="a grp" style="left:674px;top:292px;width:600px;height:179px"></div>
 <div class="a grp" style="left:674px;top:507px;width:600px;height:138px"></div>
 <div class="a grp" style="left:674px;top:683px;width:600px;height:107px"></div>
 <div class="a grp" style="left:674px;top:828px;width:600px;height:261px"></div>
 <div class="a glab" style="left:684px;top:282px">Scale</div>
 <div class="a glab" style="left:684px;top:497px">Move</div>
 <div class="a glab" style="left:684px;top:673px">Rotate</div>
 <div class="a glab" style="left:684px;top:818px">Options</div>

 <div class="a dl" style="left:689px;top:327px">Horizontal:</div>
 <div class="a dl" style="left:716px;top:382px">Vertical:</div>
 <div class="a dl" style="left:689px;top:542px">Horizontal:</div>
 <div class="a dl" style="left:716px;top:597px">Vertical:</div>
 <div class="a dl" style="left:732px;top:730px">Angle:</div>

 <div class="a fld" style="left:1039px;top:322px;width:140px;height:31px"><span>100%</span></div>
 <div class="a fld" style="left:1039px;top:377px;width:140px;height:31px"><span>100%</span></div>
 <div class="a fld" style="left:1050px;top:537px;width:139px;height:31px"><span>0 pt</span></div>
 <div class="a fld" style="left:1050px;top:591.5px;width:139px;height:31px"><span>0 pt</span></div>
 <div class="a fld" style="left:861px;top:725.5px;width:104px;height:30px"><span style="left:6px">0°</span></div>

 <svg class="a" style="left:0;top:0" width="1920" height="1240" viewBox="0 0 1920 1240">
  <g stroke="#7c7c7c" stroke-width="2.5" fill="none">
   <path d="M798 337.5 H901"/><path d="M925 337.5 H1029"/>
   <path d="M798 392.5 H901"/><path d="M925 392.5 H1029"/>
   <path d="M798 552.5 H907"/><path d="M931 552.5 H1040"/>
   <path d="M798 607.5 H907"/><path d="M931 607.5 H1040"/>
  </g>
  <g stroke="#d9d9d9" stroke-width="3" fill="none">
   <circle cx="913" cy="337.5" r="7.8"/><circle cx="913" cy="392.5" r="7.8"/>
   <circle cx="919" cy="552.5" r="7.8"/><circle cx="919" cy="607.5" r="7.8"/>
  </g>
  <circle cx="823" cy="739.5" r="25.5" stroke="#d9d9d9" stroke-width="2.2" fill="none"/>
  <path d="M823 739.5 H848" stroke="#d9d9d9" stroke-width="2.4"/>
  <!-- link icon -->
  <g stroke="#d6d6d6" stroke-width="2.2" fill="none" stroke-linecap="round">
   <path d="M1228 368 V372 Q1228 377 1233 377 Q1238 377 1238 372 V368"/>
   <path d="M1238 361 V357 Q1238 352 1233 352 Q1228 352 1228 357 V361"/>
   <path d="M1221 354 L1243 376"/>
  </g>
  <!-- orange box -->
  <rect x="776" y="412" width="272" height="52.5" fill="none" stroke="#f0962d" stroke-width="8.5"/>
  <circle cx="807.5" cy="436" r="9.5" fill="#3a9cf6"/>
  <circle cx="807.5" cy="436" r="3.3" fill="#4a4a4a"/>
  <circle cx="923.5" cy="436" r="9.5" fill="none" stroke="#d0d0d0" stroke-width="1.5"/>
 </svg>
 <div class="a dl" style="left:824px;top:424px;color:#f4f4f4">Relative</div>
 <div class="a dl" style="left:940px;top:424px;color:#f4f4f4">Absolute</div>

 <!-- checkboxes -->
 <div class="a cb on" style="left:690px;top:860px"></div>
 <div class="a cb" style="left:690px;top:899px"></div>
 <div class="a cb" style="left:690px;top:938.5px"></div>
 <div class="a cb on" style="left:690px;top:978px"></div>
 <div class="a cb" style="left:1045px;top:860px"></div>
 <div class="a cb" style="left:1045px;top:899px"></div>
 <div class="a cb" style="left:1045px;top:938.5px"></div>
 <div class="a dl" style="left:717px;top:859px">Transform Objects</div>
 <div class="a dl" style="left:717px;top:899px">Transform Patterns</div>
 <div class="a dl" style="left:717px;top:938px">Scale Strokes &amp; Effects</div>
 <div class="a dl" style="left:717px;top:977px">Scale Corners</div>
 <div class="a dl" style="left:1072px;top:859px">Reflect X</div>
 <div class="a dl" style="left:1072px;top:899px">Reflect Y</div>
 <div class="a dl" style="left:1072px;top:938px">Random</div>
 <div class="a" style="left:689px;top:1016px;width:571px;height:1px;background:#4a4a4a"></div>
 <svg class="a" style="left:688px;top:1033px" width="32" height="32" viewBox="0 0 32 32">
  <g fill="none" stroke="#d0d0d0" stroke-width="1.2">
   <rect x="1" y="1" width="7" height="7"/><rect x="12" y="1" width="7" height="7"/><rect x="23" y="1" width="7" height="7"/>
   <rect x="1" y="12" width="7" height="7"/><rect x="23" y="12" width="7" height="7"/>
   <rect x="1" y="23" width="7" height="7"/><rect x="12" y="23" width="7" height="7"/><rect x="23" y="23" width="7" height="7"/>
   <path d="M8 4.5 H12 M19 4.5 H23 M8 26.5 H12 M19 26.5 H23 M4.5 8 V12 M4.5 19 V23 M26.5 8 V12 M26.5 19 V23"/>
  </g>
  <rect x="12" y="12" width="7" height="7" fill="#f0f0f0"/>
 </svg>

 <div class="a cb on" style="left:675px;top:1134px"></div>
 <div class="a dl" style="left:702px;top:1132px">Preview</div>
 <div class="a btn" style="left:802px;top:1125px;width:144px;height:40px">Copy</div>
 <div class="a btn" style="left:978px;top:1125px;width:144px;height:40px">Cancel</div>
 <div class="a btn" style="left:1130px;top:1124px;width:145px;height:41px;border-width:3px;border-color:#fafafa;line-height:35px">OK</div>
</div>

</body></html>
